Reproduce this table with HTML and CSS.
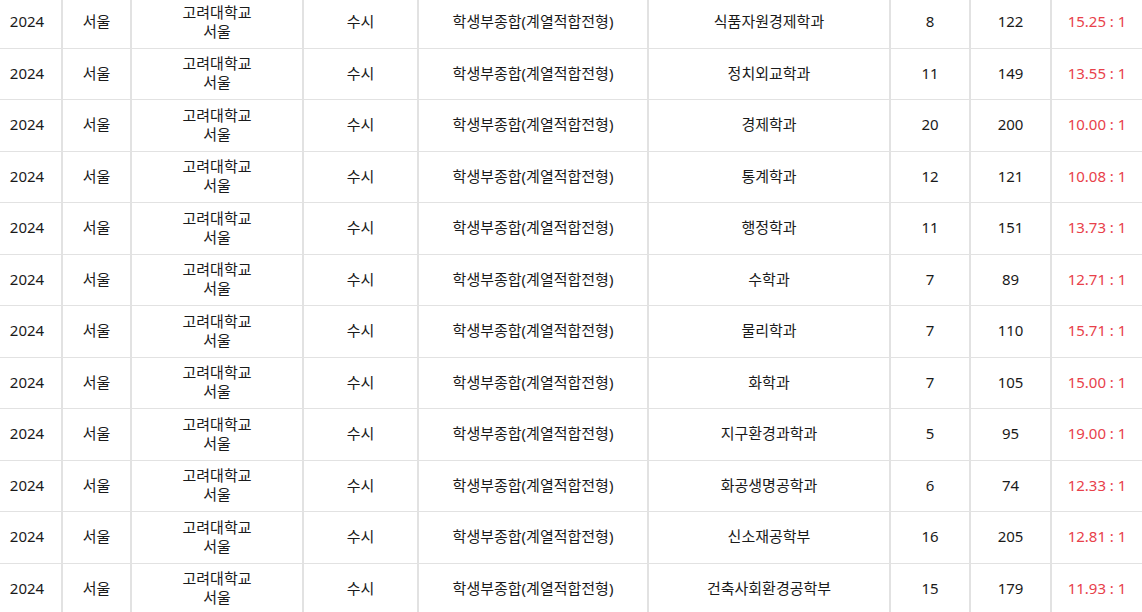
FILE: index.html
```html
<!DOCTYPE html>
<html lang="ko">
<head>
<meta charset="utf-8">
<link rel="stylesheet" href="styles.css">
</head>
<body>
<div class="wrap">
<table class="rates">
<colgroup>
<col class="c1"><col class="c2"><col class="c3"><col class="c4"><col class="c5"><col class="c6"><col class="c7"><col class="c8"><col class="c9">
</colgroup>
<tbody>
<tr><td>2024</td><td>서울</td><td>고려대학교<br>서울</td><td>수시</td><td>학생부종합(계열적합전형)</td><td>식품자원경제학과</td><td>8</td><td>122</td><td class="rate">15.25 : 1</td></tr>
<tr><td>2024</td><td>서울</td><td>고려대학교<br>서울</td><td>수시</td><td>학생부종합(계열적합전형)</td><td>정치외교학과</td><td>11</td><td>149</td><td class="rate">13.55 : 1</td></tr>
<tr><td>2024</td><td>서울</td><td>고려대학교<br>서울</td><td>수시</td><td>학생부종합(계열적합전형)</td><td>경제학과</td><td>20</td><td>200</td><td class="rate">10.00 : 1</td></tr>
<tr><td>2024</td><td>서울</td><td>고려대학교<br>서울</td><td>수시</td><td>학생부종합(계열적합전형)</td><td>통계학과</td><td>12</td><td>121</td><td class="rate">10.08 : 1</td></tr>
<tr><td>2024</td><td>서울</td><td>고려대학교<br>서울</td><td>수시</td><td>학생부종합(계열적합전형)</td><td>행정학과</td><td>11</td><td>151</td><td class="rate">13.73 : 1</td></tr>
<tr><td>2024</td><td>서울</td><td>고려대학교<br>서울</td><td>수시</td><td>학생부종합(계열적합전형)</td><td>수학과</td><td>7</td><td>89</td><td class="rate">12.71 : 1</td></tr>
<tr><td>2024</td><td>서울</td><td>고려대학교<br>서울</td><td>수시</td><td>학생부종합(계열적합전형)</td><td>물리학과</td><td>7</td><td>110</td><td class="rate">15.71 : 1</td></tr>
<tr><td>2024</td><td>서울</td><td>고려대학교<br>서울</td><td>수시</td><td>학생부종합(계열적합전형)</td><td>화학과</td><td>7</td><td>105</td><td class="rate">15.00 : 1</td></tr>
<tr><td>2024</td><td>서울</td><td>고려대학교<br>서울</td><td>수시</td><td>학생부종합(계열적합전형)</td><td>지구환경과학과</td><td>5</td><td>95</td><td class="rate">19.00 : 1</td></tr>
<tr><td>2024</td><td>서울</td><td>고려대학교<br>서울</td><td>수시</td><td>학생부종합(계열적합전형)</td><td>화공생명공학과</td><td>6</td><td>74</td><td class="rate">12.33 : 1</td></tr>
<tr><td>2024</td><td>서울</td><td>고려대학교<br>서울</td><td>수시</td><td>학생부종합(계열적합전형)</td><td>신소재공학부</td><td>16</td><td>205</td><td class="rate">12.81 : 1</td></tr>
<tr><td>2024</td><td>서울</td><td>고려대학교<br>서울</td><td>수시</td><td>학생부종합(계열적합전형)</td><td>건축사회환경공학부</td><td>15</td><td>179</td><td class="rate">11.93 : 1</td></tr>
</tbody>
</table>
</div>
</body>
</html>
```
FILE: styles.css
```css
html, body {
  margin: 0;
  padding: 0;
  background: #ffffff;
  overflow: hidden;
}
.wrap {
  margin-top: -4px;
  width: 1142px;
}
.rates {
  width: 1142px;
  border-collapse: collapse;
  table-layout: fixed;
  font-family: "Noto Sans", "Noto Sans CJK KR", sans-serif;
  font-size: 15px;
  color: #1a1a1a;
}
.rates td {
  height: 51.5px;
  box-sizing: border-box;
  padding: 0 0 1px 0;
  text-align: center;
  vertical-align: middle;
  line-height: 19px;
  border: 1px solid #e2e2e2;
  border-left: 2px solid #e2e2e2;
}
.rates tr td:first-child {
  border-left: none;
  padding-right: 7px;
}
.rates tr td:last-child { border-right: none; }
.c1 { width: 62px; }
.c2 { width: 69px; }
.c3 { width: 172px; }
.c4 { width: 115px; }
.c5 { width: 230px; }
.c6 { width: 242px; }
.c7 { width: 80px; }
.c8 { width: 81px; }
.c9 { width: 91px; }
.rates td.rate {
  color: #e8414a;
}
```
